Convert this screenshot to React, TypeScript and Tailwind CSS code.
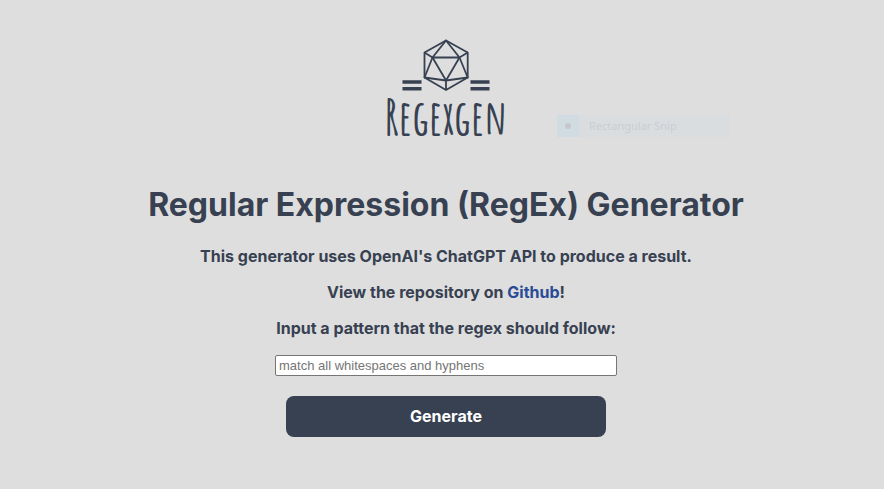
import type { FormEvent } from "react";

function Logo() {
  return (
    <div className="flex h-[104px] flex-col items-center text-[#374151]">
      <svg
        viewBox="0 0 120 56"
        className="h-[56px] w-[120px] shrink-0"
        fill="none"
        stroke="currentColor"
        strokeWidth="1.8"
        strokeLinejoin="round"
        aria-hidden="true"
      >
        <path d="M60 4.5 81.7 16.5V41.5L60 54 38.5 41.5V16.5Z" />
        <path d="M60 4.5 46.5 21.5H73.5ZM46.5 21.5 60 44.5 73.5 21.5" />
        <path d="M38.5 16.5 46.5 21.5 38.5 41.5 60 44.5 81.7 41.5 73.5 21.5 81.7 16.5M60 44.5V54" />
        <path d="M16.5 46H35.5M16.5 52.7H35.5M84.5 46H103.5M84.5 52.7H103.5" strokeWidth="3.4" />
      </svg>
      <p className="font-['Amatic_SC','Open_Sans_Condensed','Liberation_Sans',sans-serif] text-[48px] leading-[50px] font-bold">
        Regexgen
      </p>
    </div>
  );
}

function SnipLabel() {
  return (
    <div className="absolute top-[115px] left-[557px] flex h-[22px] w-[173px] items-center bg-[#d9dde0] text-[#cacdd0]">
      <span className="flex h-full w-[22px] items-center justify-center bg-[#d0dbe2]">
        <span className="size-[6px] rounded-full bg-[#c5c9cd]" />
      </span>
      <span className="pl-[10px] font-['Noto_Sans',sans-serif] text-[11px] font-normal">Rectangular Snip</span>
    </div>
  );
}

export default function App() {
  const onSubmit = (event: FormEvent) => event.preventDefault();
  return (
    <main className="relative flex min-h-screen flex-col items-center bg-[#dedede] pt-9 pl-2 font-['Inter',sans-serif] text-base font-bold text-[#374151]">
      <Logo />
      <SnipLabel />
      <h1 className="mt-[45px] text-[32px] leading-10">Regular Expression (RegEx) Generator</h1>
      <p className="mt-[19px] leading-6">This generator uses OpenAI's ChatGPT API to produce a result.</p>
      <p className="mt-3 leading-6">
        View the repository on{" "}
        <a href="https://github.com" className="text-[#2a4b96]">Github</a>!
      </p>
      <form onSubmit={onSubmit} className="mt-3 flex flex-col items-center">
        <label htmlFor="pattern" className="leading-6">Input a pattern that the regex should follow:</label>
        <input
          id="pattern"
          type="text"
          placeholder="match all whitespaces and hyphens"
          className="mt-[15px] h-[21px] w-[342px] rounded-[2px] border border-[#767676] bg-white px-[3px] font-['Liberation_Sans',sans-serif] text-[13px] font-normal placeholder:text-[#757575]"
        />
        <button type="submit" className="mt-5 h-[41px] w-80 rounded-lg bg-[#374151] pb-px text-white">
          Generate
        </button>
      </form>
    </main>
  );
}
